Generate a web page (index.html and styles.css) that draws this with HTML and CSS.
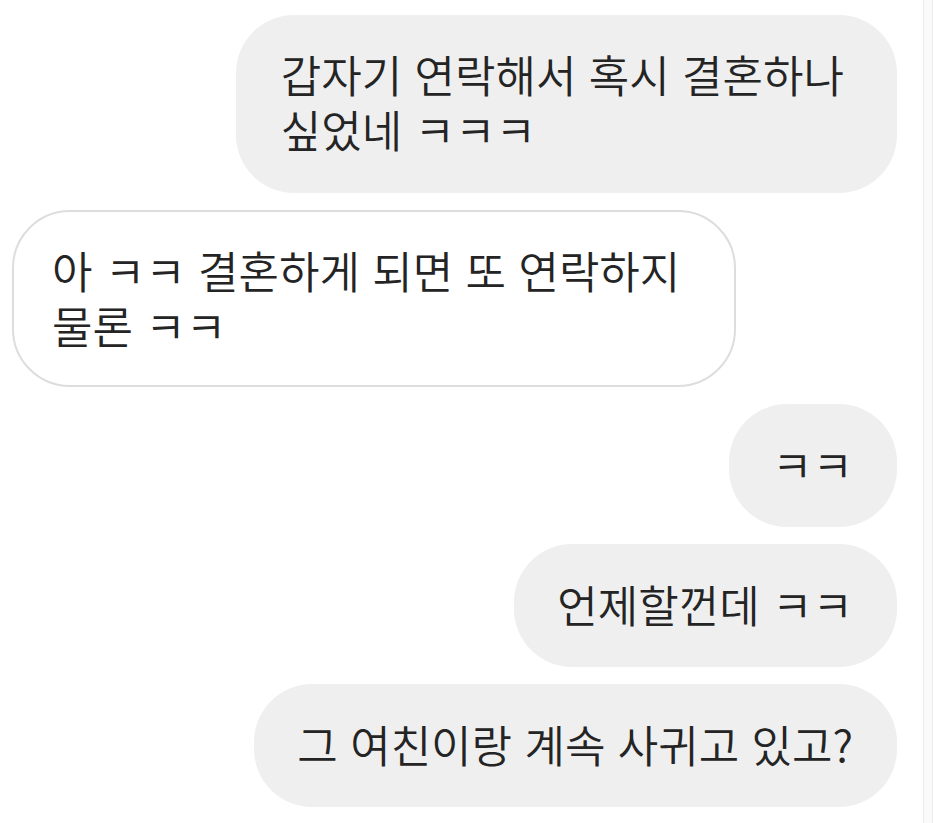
FILE: index.html
```html
<!DOCTYPE html>
<html lang="ko">
<head>
<meta charset="utf-8">
<title>Chat</title>
<link rel="stylesheet" href="styles.css">
</head>
<body>
<div class="page">
  <main class="chat">
    <div class="row sent"><div class="bubble multi">갑자기 연락해서 혹시 결혼하나<br>싶었네 ㅋㅋㅋ</div></div>
    <div class="row received"><div class="bubble multi">아 ㅋㅋ 결혼하게 되면 또 연락하지<br>물론 ㅋㅋ</div></div>
    <div class="row sent"><div class="bubble">ㅋㅋ</div></div>
    <div class="row sent"><div class="bubble">언제할껀데 ㅋㅋ</div></div>
    <div class="row sent"><div class="bubble">그 여친이랑 계속 사귀고 있고?</div></div>
  </main>
  <div class="scrollbar"></div>
</div>
</body>
</html>
```
FILE: styles.css
```css
html, body {
  margin: 0;
  padding: 0;
  background: #ffffff;
}
body {
  font-family: "Noto Sans CJK KR", "Noto Sans", sans-serif;
  color: #242424;
}
.page {
  display: flex;
  height: 823px;
  overflow: hidden;
}
.chat {
  flex: 1;
  display: flex;
  flex-direction: column;
  gap: 17px;
  padding: 15px 26px 0 12px;
}
.row {
  display: flex;
}
.row.sent {
  justify-content: flex-end;
}
.row.received {
  justify-content: flex-start;
}
.bubble {
  font-size: 44px;
  font-weight: 350;
  line-height: 55px;
  padding: 33px 44px 35px 43px;
  border-radius: 58px;
  white-space: nowrap;
}
.sent .bubble {
  background: #efefef;
}
.sent .bubble.multi {
  padding: 32px 53px 36px 45px;
}
.received .bubble {
  background: #ffffff;
  border: 2px solid #dddddd;
  padding: 31px 54px 32px 38px;
}
.scrollbar {
  width: 8px;
  background: #fafafa;
  border-left: 1px solid #ececec;
  border-right: 1px solid #ececec;
  margin-right: 1px;
}
```
